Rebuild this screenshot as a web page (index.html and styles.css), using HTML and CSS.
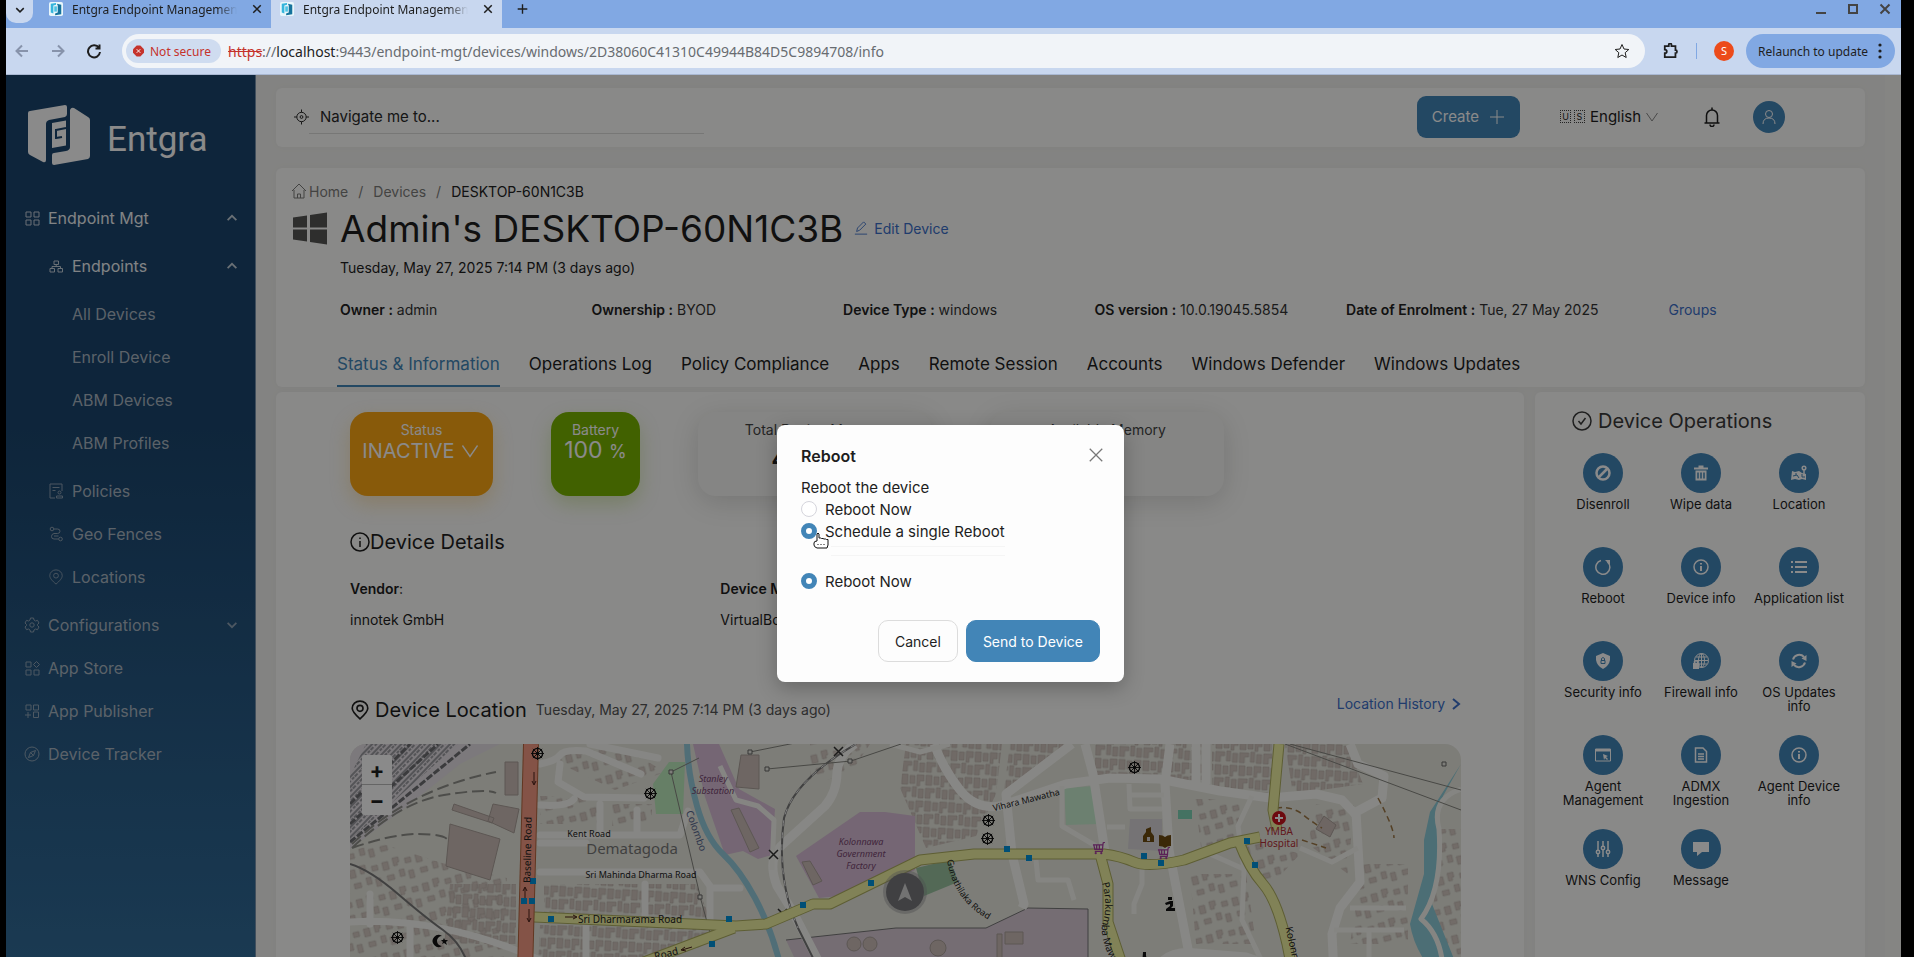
FILE: index.html
```html
<!DOCTYPE html>
<html lang="en">
<head>
  <meta charset="UTF-8">
  <title>Entgra Endpoint Management</title>
  <link rel="stylesheet" href="styles.css">
</head>
<body>
  <!-- Shared icons -->
  <svg class="defs" aria-hidden="true">
    <symbol id="i-down" viewBox="0 0 16 16"><path d="M3 5.500l5 5 5-5"/></symbol>
    <symbol id="i-chevron" viewBox="0 0 16 16"><path d="M2.500 4l5.500 8 5.500-8"/></symbol>
    <symbol id="i-up" viewBox="0 0 16 16"><path d="M3 10.500l5-5 5 5"/></symbol>
    <symbol id="i-close" viewBox="0 0 16 16"><path d="M3 3l10 10M13 3L3 13"/></symbol>
    <symbol id="i-plus" viewBox="0 0 16 16"><path d="M8 1v14M1 8h14"/></symbol>
    <symbol id="i-pin" viewBox="0 0 16 18"><path d="M8 17C4 13.500 1 10.500 1 7.500a7 6.500 0 0 1 14 0C15 10.500 12 13.500 8 17z"/><circle cx="8" cy="7.500" r="2.700"/></symbol>
    <symbol id="i-info" viewBox="0 0 20 20"><circle cx="10" cy="10" r="9"/><path d="M10 9v6M10 5.500v1.500"/></symbol>
    <symbol id="i-favicon" viewBox="0 0 16 16"><rect width="16" height="16" rx="2" fill="#e8f6fb" stroke="none"/><path d="M2 2l6-1v2L5 4v9l-3-1z" fill="#35b5dc" stroke="none"/><path d="M9 2l5 1v11l-7 1v-2l3-1V4z" fill="#15739c" stroke="none"/><path d="M6 5h3v6H6z" fill="#4cc3e3" stroke="none"/></symbol>
  </svg>

  <!-- Browser window -->
  <div class="tab-strip">
    <button class="tab-search" aria-label="Search tabs"><svg><use href="#i-down"/></svg></button>
    <div class="browser-tab">
      <svg class="favicon"><use href="#i-favicon"/></svg>
      <span class="tab-title">Entgra Endpoint Management</span>
      <button aria-label="Close tab"><svg><use href="#i-close"/></svg></button>
    </div>
    <div class="browser-tab current">
      <svg class="favicon"><use href="#i-favicon"/></svg>
      <span class="tab-title">Entgra Endpoint Management</span>
      <button aria-label="Close tab"><svg><use href="#i-close"/></svg></button>
    </div>
    <button class="new-tab" aria-label="New tab"><svg><use href="#i-plus"/></svg></button>
    <div class="window-buttons">
      <button aria-label="Minimize"><svg viewBox="0 0 12 12"><path d="M1 10h10"/></svg></button>
      <button aria-label="Maximize"><svg viewBox="0 0 12 12"><path d="M2 2h8v8H2z"/></svg></button>
      <button aria-label="Close"><svg viewBox="0 0 12 12"><path d="M1.500 1.500l9 9M10.500 1.500l-9 9"/></svg></button>
    </div>
  </div>
  <div class="toolbar">
    <button class="nav off" aria-label="Back"><svg viewBox="0 0 16 16"><path d="M14 8H3M8 2.500L2.500 8 8 13.500"/></svg></button>
    <button class="nav off" aria-label="Forward"><svg viewBox="0 0 16 16"><path d="M2 8h11M8 2.500L13.500 8 8 13.500"/></svg></button>
    <button class="nav" aria-label="Reload"><svg viewBox="0 0 16 16"><path d="M13 5A6 6 0 1 0 14 9M13.500 1.500v4h-4"/></svg></button>
    <div class="omnibox">
      <span class="not-secure"><svg viewBox="0 0 12 12"><path d="M4 0h4l4 4v4l-4 4H4L0 8V4z" fill="#c5322b"/><path d="M4 4l4 4M8 4l-4 4" stroke="#fff"/></svg>Not secure</span>
      <span class="url"><s>https</s>://<b>localhost</b>:9443/endpoint-mgt/devices/windows/2D38060C41310C49944B84D5C9894708/info</span>
      <button class="star" aria-label="Bookmark"><svg viewBox="0 0 16 16"><path d="M8 1.500l2 4.500 4.800.5-3.600 3.200 1 4.800L8 12l-4.200 2.500 1-4.800L1.200 6.500 6 6z"/></svg></button>
    </div>
    <button class="extensions" aria-label="Extensions"><svg viewBox="0 0 18 18"><path d="M2 3.500h4.500V2a1.500 1.500 0 0 1 3 0v1.500H14V8a1.500 1.500 0 0 1 0 3.500V16H2v-4.500c3 0 3-4 0-4z"/></svg></button>
    <span class="divider"></span>
    <span class="profile">S</span>
    <button class="relaunch">Relaunch to update <svg viewBox="0 0 4 16"><circle cx="2" cy="2" r="1.600"/><circle cx="2" cy="8" r="1.600"/><circle cx="2" cy="14" r="1.600"/></svg></button>
  </div>

  <div class="app">
    <nav class="sidebar">
      <a href="#" class="logo">
        <svg viewBox="0 0 62 60">
          <path d="M0 8q0-2 2-2L37 0q2 0 2 2v7q0 2-2 3L21 15q-3 1-3 4v36q0 3-3 2L2 50q-2-1-2-3z"/>
          <path d="M42 5q1-3 4-2l14 9q2 1 2 3v36q0 2-2 3l-34 6q-2 0-2-2v-8q0-2 2-2l12-2q4-1 4-4z"/>
          <path d="M24 18l14-2.500v25L24 43z"/>
          <path class="notch" d="M28 25l10-2M28 33l6-1M28 24v10"/>
        </svg>
        <span>Entgra</span>
      </a>
      <a href="#" class="item bright"><svg viewBox="0 0 16 16"><path d="M2 2h5v5H2zM10 2h5v5h-5zM2 10h5v5H2zM10 10h5v5h-5z"/></svg>Endpoint Mgt<svg class="arrow"><use href="#i-up"/></svg></a>
      <div class="submenu">
        <a href="#" class="item bright"><svg viewBox="0 0 16 16"><path d="M6 3h4.500v3.500H6zM2 10.500h4.500V14H2zM10 10.500h4.500V14H10zM8.200 6.500v2M4 10.500v-2h8.500v2"/></svg>Endpoints<svg class="arrow"><use href="#i-up"/></svg></a>
        <div class="submenu leaf">
          <a href="#" class="item">All Devices</a>
          <a href="#" class="item">Enroll Device</a>
          <a href="#" class="item">ABM Devices</a>
          <a href="#" class="item">ABM Profiles</a>
        </div>
        <a href="#" class="item"><svg viewBox="0 0 16 16"><path d="M7 15H2V1h12v7M4.500 4.500h7M4.500 7.500h3"/><circle cx="11.500" cy="9.500" r="1.500"/><path d="M8.500 15v-2h6v2z"/></svg>Policies</a>
        <a href="#" class="item"><svg viewBox="0 0 16 16"><circle cx="4" cy="3" r="1.800"/><circle cx="12.500" cy="13" r="1.800"/><path d="M6 3h3.500q2.500 0 2.500 2.200T9.500 7.500H6Q3.500 8 3.500 10.500T6 13h4.500M6 10h4.500"/></svg>Geo Fences</a>
        <a href="#" class="item"><svg><use href="#i-pin"/></svg>Locations</a>
      </div>
      <a href="#" class="item"><svg viewBox="0 0 16 16"><path d="M6.500 1h3l.5 2 1.500 1 2-.7 1.500 2.700L13.500 7.500v1L15 10l-1.500 2.700-2-.7-1.500 1-.5 2h-3L6 13l-1.500-1-2 .7L1 10l1.500-1.500v-1L1 6l1.500-2.700 2 .7L6 3z"/><circle cx="8" cy="8" r="2.200"/></svg>Configurations<svg class="arrow"><use href="#i-down"/></svg></a>
      <a href="#" class="item"><svg viewBox="0 0 16 16"><path d="M2 2h5v5H2zM12.500 1.500l3 3-3 3-3-3zM2 10h5v5H2zM10 10h5v5h-5z"/></svg>App Store</a>
      <a href="#" class="item"><svg viewBox="0 0 16 16"><path d="M2 2h5v5H2zM9.500 2h5v5h-5zM9.500 9h5v5.500h-5zM1 12h6M4 9v6"/></svg>App Publisher</a>
      <a href="#" class="item"><svg viewBox="0 0 16 16"><circle cx="8" cy="8" r="7"/><path d="M11.500 4.500L9.500 9.500l-5 2 2-5zM6.500 6.500l3 3"/></svg>Device Tracker</a>
    </nav>

    <main class="main">
      <header class="card topbar">
        <label class="search">
          <svg viewBox="0 0 16 16"><circle cx="8" cy="8" r="5"/><circle cx="8" cy="8" r="1.500"/><path d="M8 0v3M8 13v3M0 8h3M13 8h3"/></svg>
          <input type="text" placeholder="Navigate me to..." aria-label="Navigate me to">
        </label>
        <button class="create">Create <svg><use href="#i-plus"/></svg></button>
        <label class="language"><span class="flag">U</span><span class="flag">S</span>
          <select aria-label="Language"><option>English</option></select>
          <svg><use href="#i-chevron"/></svg>
        </label>
        <button class="bell" aria-label="Notifications"><svg viewBox="0 0 16 20"><path d="M8 .5V3M2.500 16V8.500a5.500 5.500 0 0 1 11 0V16M.5 16h15M6 17.500a2 2 0 0 0 4 0"/></svg></button>
        <button class="avatar" aria-label="Account"><svg viewBox="0 0 16 16"><circle cx="8" cy="5" r="3.500"/><path d="M2 15q0-6 6-6t6 6"/></svg></button>
      </header>

      <section class="card device">
        <div class="breadcrumb">
          <a href="#"><svg viewBox="0 0 16 16"><path d="M1 8l7-7 7 7M3 7v8h10V7M6.500 15v-4h3v4"/></svg>Home</a><i>/</i><a href="#">Devices</a><i>/</i><span>DESKTOP-60N1C3B</span>
        </div>
        <div class="title-row">
          <svg class="windows" viewBox="0 0 34 32"><path d="M0 5l14-2v12H0zM17 2.500L34 0v15H17zM0 17h14v12L0 27zM17 17h17v15l-17-2.500z"/></svg>
          <h1>Admin's DESKTOP-60N1C3B</h1>
          <a href="#"><svg viewBox="0 0 16 16"><path d="M1 15h14M3 12l1-4 7-7 2.500 2.500-7 7z"/></svg>Edit Device</a>
        </div>
        <p class="enrolled">Tuesday, May 27, 2025 7:14 PM (3 days ago)</p>
        <div class="facts">
          <span><b>Owner :</b> admin</span>
          <span><b>Ownership :</b> BYOD</span>
          <span><b>Device Type :</b> windows</span>
          <span><b>OS version :</b> 10.0.19045.5854</span>
          <span><b>Date of Enrolment :</b> Tue, 27 May 2025</span>
          <a href="#">Groups</a>
        </div>
        <nav class="tabs">
          <a href="#" class="active">Status &amp; Information</a>
          <a href="#">Operations Log</a>
          <a href="#">Policy Compliance</a>
          <a href="#">Apps</a>
          <a href="#">Remote Session</a>
          <a href="#">Accounts</a>
          <a href="#">Windows Defender</a>
          <a href="#">Windows Updates</a>
        </nav>
      </section>

      <div class="columns">
        <section class="card info">
          <div class="stats">
            <div class="stat inactive">Status<button>INACTIVE <svg><use href="#i-chevron"/></svg></button></div>
            <div class="stat battery">Battery<strong>100 <small>%</small></strong></div>
            <div class="stat">Total Device Memory<b>4.00 GB</b></div>
            <div class="stat">Available Memory<b>1.8</b></div>
          </div>
          <h2><svg><use href="#i-info"/></svg>Device Details</h2>
          <dl class="details">
            <div><dt>Vendor<span>:</span></dt><dd>innotek GmbH</dd></div>
            <div><dt>Device Model<span>:</span></dt><dd>VirtualBox</dd></div>
            <div></div>
          </dl>
          <div class="location-head">
            <h2><svg><use href="#i-pin"/></svg>Device Location</h2>
            <span>Tuesday, May 27, 2025 7:14 PM (3 days ago)</span>
            <a href="#">Location History <svg viewBox="0 0 10 16"><path d="M2 3l6 5-6 5"/></svg></a>
          </div>
          <div class="map">
            <svg class="map-tiles" viewBox="0 0 1111 230" preserveAspectRatio="xMidYMin slice">
              <defs>
                <pattern id="houses" width="34" height="30" patternUnits="userSpaceOnUse" patternTransform="rotate(-14)">
                  <path d="M2 3h6v8H2zM13 1h6v5h-2v3h-4zM25 4h6v5h-6zM4 17h7v5H4zM17 14h5v7h-5zM26 17h5v8h-5z" fill="#d3c8c1" stroke="#b9afa8" stroke-width=".6"/>
                </pattern>
                <pattern id="blocks" width="24" height="26" patternUnits="userSpaceOnUse" patternTransform="rotate(3)">
                  <path d="M1 1h6v10H1zM9 2h5v8H9zM16 1h7v6h-4v5h-3zM1 14h9v4H6v6H1zM12 13h4v10h-4zM18 15h5v9h-5z" fill="#d0c4bd" stroke="#b5aba4" stroke-width=".6"/>
                </pattern>
                <pattern id="rails" width="10" height="7" patternUnits="userSpaceOnUse" patternTransform="rotate(-46)">
                  <path d="M0 2h10M0 5h4M6 5h3" stroke="#84858a" stroke-width="1.500"/>
                </pattern>
                <symbol id="m-wheel" viewBox="0 0 14 14"><circle cx="7" cy="7" r="5.500" fill="none" stroke="#111" stroke-width="1.500"/><circle cx="7" cy="7" r="2" fill="#111"/><path d="M7 0v14M0 7h14M2 2l10 10M12 2L2 12" stroke="#111"/></symbol>
                <symbol id="m-cart" viewBox="0 0 14 14"><path d="M14 0l-2 1-1 9H3M1 3h11M2 3l1 5h9M5 3v5M8 3v5" fill="none" stroke="#a63da0" stroke-width="1.300"/><circle cx="4" cy="12" r="1.200" fill="#a63da0"/><circle cx="10" cy="12" r="1.200" fill="#a63da0"/></symbol>
                <path id="gunathilaka" d="M597 116q6 40 42 60"/>
                <path id="parakumba" d="M752 139q6 20 1 38t12 46"/>
              </defs>
              <rect width="1111" height="230" fill="#e7e7de"/>

              <!-- Railway yard -->
              <path d="M0 0h150L110 20 60 60 0 105z" fill="#e5e0e5"/>
              <path d="M16 0h92L0 96V32z" fill="url(#rails)"/>
              <path d="M0 98L120 0M0 80L88 0M0 60L60 0" stroke="#6d6e72" stroke-width="3" stroke-dasharray="7 2" fill="none"/>
              <path d="M2 100Q60 45 146 28M2 104Q50 58 94 51t52-2M2 104q40-14 66-14t30 6" stroke="#8f8f8a" stroke-width="2" stroke-dasharray="12 5" fill="none"/>

              <!-- Residential blocks -->
              <path d="M0 107l30-8 62 20 65 15-3 79H0z" fill="url(#houses)"/>
              <path d="M100 140h66v60H94zM194 140h152l14 34-166-6zM190 181l180 2-20 20-80 20H188z" fill="url(#blocks)"/>
              <path d="M205 10l70-6 40 24-50 18-50-24zM190 52h60v28h-60zM262 60h40v22h-40z" fill="url(#houses)"/>
              <path d="M556 0h96l-6 50-20 42-50 12-26-60zM660 0h62l-68 46zM745 0h112v36h-112zM862 0h60v50l-60-8zM935 0h62l16 40-70 10z" fill="url(#blocks)"/>
              <path d="M845 55h46l-4 40-36 8zM890 90l60 20-20 22-20 10zM840 130h56l10 70h-60zM966 60h38l-6 70-40-30zM1012 120h46v80h-58zM1084 85h27v128h-27z" fill="url(#houses)"/>
              <path d="M460 0h60l-20 30-40 10z" fill="url(#houses)"/>

              <!-- Land use -->
              <path d="M335 18h-16l-16 22 3 30h27z" fill="#bdeabd"/>
              <path d="M343 0h26l20 45 36 20-3 46-14 4-15-8-18 4-20-58z" fill="#d8bdd6"/>
              <path d="M446 112l64-44h25l30 4v54l-56 24-40 4z" fill="#d8bdd6"/>
              <path d="M436 196l110-12h90l42-20 60 1v65H452z" fill="#d8c9d5"/>
              <path d="M436 196l110-12h90l42-20 60 1v65" fill="none" stroke="#777"/>
              <path d="M714 44l30-2 5 38-33 1z" fill="#c8ecd0"/>
              <path d="M566 124l34-8 8 22-34 14z" fill="#99c3a0"/>
              <path d="M828 66h14v9h-14z" fill="#7fd3b5"/>
              <path d="M780 75h32v32l-34-2z" fill="#d8d5d9"/>

              <!-- Large buildings -->
              <g fill="#cbbdb7" stroke="#aba09a">
                <path d="M100 80l50 15-10 41-44-14zM143 60l26 5-5 24-26-12zM155 18h13v33h-13zM104 60l40 14-2 5-40-13z"/>
                <path d="M391 11h18v34l-23-2zM381 66l8-2 20 40-9 4zM452 118l8-1 12 20-9 4zM655 188h18v12h-18zM647 190h5v40h-5zM974 72l12 9-6 12-14-8z"/>
                <circle cx="588" cy="204" r="8"/><circle cx="504" cy="200" r="7"/><circle cx="520" cy="200" r="7"/>
              </g>

              <!-- Water -->
              <path d="M337 0q1 30 10 62t26 48 32 44 24 62" fill="none" stroke="#94cbdc" stroke-width="6"/>
              <path d="M1111 20l-18 32-7 24 4 30-8 54 28 70h-26q-20-25-24-50l14-50v-34l6-28 31-48z" fill="#8ccbd8"/>

              <!-- Minor roads -->
              <g fill="none" stroke="#f8f8f4" stroke-width="7" stroke-linejoin="round" stroke-linecap="round">
                <path d="M190 91h140l8-24M190 99h46M190 128h160l10 14v40M360 144h30"/>
                <path d="M190 20q16-3 20-9t26-4l55 23M210 20l-2 18 26 15 60 1M240 0l68 14M190 61q28 2 34-6M250 60v30M287 66v22M236 180v34M295 140v40"/>
                <path d="M0 178q90-6 190 38M20 150v30M60 182v30"/>
              </g>
              <g fill="none" stroke="#fafaf6" stroke-width="9" stroke-linejoin="round">
                <path d="M505 0q-16 10-18 28 0 20-12 34l-44 40q-14 14-4 40l16 26 32 62"/>
                <path d="M584 0q10 26 26 46t40 16l66-22 44-6 50 1 60 12 50 7 46-4 26 6 15 16M735 0l8 30 12 78M722 0l-66 50 6 60 12 50-2 4"/>
                <path d="M820 0l-5 40 4 66 20 104M846 0v40M856 0v40M1000 0l8 20 26 12-2 22-26 14 4 70-20 26-8 26 2 40"/>
                <path d="M806 226q10-20 40-17l50 4 46 16"/>
              </g>
              <g fill="none" stroke="#f6f6f1" stroke-width="5" stroke-linejoin="round">
                <path d="M779 40l1 25h32M780 51h34M712 42v40l34 20M757 83h18M902 52l-14 30 6 44-2 50 24 50M950 104l32 14 26-14M984 186h70M1000 164h56M1019 186v40M686 116l2 20h30l6 20M792 116v24l-8 20v10M860 110l36 16M1111 45q-30 10-22 40 4 60-18 90 20 16 22 50"/>
                <path d="M370 22l16 34 22 6 16 14-2 50M540 0l30 8 30-8"/>
              </g>

              <!-- Railway and power lines -->
              <path d="M0 120q20 6 48 30t45 36 24 32M506 0q-62 36-72 74-8 60 14 110l20 40" fill="none" stroke="#777" stroke-width="2"/>
              <path d="M506 0q-62 36-72 74-8 60 14 110" fill="none" stroke="#eee" stroke-dasharray="6 6"/>
              <path d="M349 14l-28 14 30 128 12 44M400 8l50-10M417 25l84-8 50-17M935 0l176 66M940 0l171 46" fill="none" stroke="#85857f"/>
              <path d="M926 64q16-2 26 6t20 14M1028 54q16 30 16 40M952 96l24 8" fill="none" stroke="#9c7745" stroke-width="1.500" stroke-dasharray="6 4"/>
              <path d="M319 26h4v4h-4zM398 6h4v4h-4zM415 23h4v4h-4zM498 15h4v4h-4zM348 151h4v4h-4zM1092 18h4v4h-4z" fill="#e8e8e0" stroke="#666"/>
              <path d="M484 3l9 9m0-9l-9 9M419 106l9 9m0-9l-9 9M428 165l9 9m0-9l-9 9" stroke="#333" stroke-width="1.500"/>

              <!-- Main roads -->
              <g fill="none" stroke-linejoin="round">
                <path d="M184 173l202 9 30-2 47-20h17l90-44 54-6h130q16 2 30 8t50-2l46-17 30-6M750 110l8 30v38l20 60M929 0l-6 66 4 20M889 98q10 26 24 42t24 60l8 40M384 184l-90 34-50 18" stroke="#adae60" stroke-width="11"/>
                <path d="M184 173l202 9 30-2 47-20h17l90-44 54-6h130q16 2 30 8t50-2l46-17 30-6M750 110l8 30v38l20 60M929 0l-6 66 4 20M889 98q10 26 24 42t24 60l8 40M384 184l-90 34-50 18" stroke="#eff0a2" stroke-width="9"/>
                <path d="M181 0l-6 230" stroke="#b4653d" stroke-width="16"/>
                <path d="M181 0l-6 230" stroke="#f49a84" stroke-width="14"/>
                <path d="M184 28v12m-2-3l2 4 2-4M175 156v-12m-2 3l2-4 2 4M179 165v12m-2-3l2 4 2-4M215 173h11m-3-2l4 2-4 2M342 203l-10 3m3-3l-4 3 5 1" stroke="#4a2018"/>
              </g>
              <path d="M180 134h6v6h-6zM171 154h6v6h-6zM179 154h6v6h-6zM198 172h6v6h-6zM376 172h6v6h-6zM359 197h6v6h-6zM450 158h6v6h-6zM518 136h6v6h-6zM654 102h6v6h-6zM676 111h6v6h-6zM791 109h6v6h-6zM808 116h6v6h-6zM894 94h6v6h-6zM902 118h6v6h-6z" fill="#0092da"/>

              <!-- Points of interest -->
              <use href="#m-wheel" x="181" y="3" width="13" height="13"/>
              <use href="#m-wheel" x="294" y="43" width="13" height="13"/>
              <use href="#m-wheel" x="41" y="187" width="13" height="13"/>
              <use href="#m-wheel" x="778" y="17" width="13" height="13"/>
              <use href="#m-wheel" x="632" y="70" width="13" height="13"/>
              <use href="#m-wheel" x="631" y="88" width="13" height="13"/>
              <use href="#m-cart" x="742" y="98" width="13" height="13"/>
              <use href="#m-cart" x="807" y="103" width="13" height="13"/>
              <path d="M92 192a6 6 0 1 0 0 10 5 5 0 1 1 0-10zM94 194l1 2h3l-2 2 1 3-3-2-2 1 1-2-2-2h2z" fill="#111"/>
              <path d="M793 92l3-4v-3l5-2v5l3 4v6h-11zM797 93v4h3v-4z" fill="#6e4a10" fill-rule="evenodd"/>
              <path d="M809 91q4 0 6 2 2-2 6-2v11q-4 0-6 2-2-2-6-2z" fill="#6e4a10"/>
              <path d="M818 153h4v3h-4zM815 159l5-2h3v5l-2 2h4v3h-9v-2l4-3v-2l-4 1zM793 208h3v4l4 10h-8z" fill="#111"/>
              <circle cx="929" cy="74" r="7" fill="#c9141c"/>
              <path d="M929 70v8M925 74h8" stroke="#fff" stroke-width="2"/>
              <circle cx="555" cy="148" r="22" fill="#8e8e92" opacity=".4"/>
              <circle cx="555" cy="148" r="19" fill="#77777b"/>
              <path d="M555 139l7 18-7-4-7 4z" fill="#d2d2d2"/>

              <g class="map-text">
                <text transform="translate(181 106) rotate(-89)" class="road big">Baseline Road</text>
                <text x="239" y="93" class="road">Kent Road</text>
                <text x="282" y="110" class="district">Dematagoda</text>
                <text x="291" y="134" class="road">Sri Mahinda Dharma Road</text>
                <text x="280" y="179" class="road big">Sri Dharmarama Road</text>
                <text transform="translate(343 88) rotate(70)" class="water">Colombo</text>
                <text x="363" y="38" class="works">Stanley</text><text x="363" y="50" class="works">Substation</text>
                <text x="511" y="101" class="works">Kolonnawa</text><text x="511" y="113" class="works">Government</text><text x="511" y="125" class="works">Factory</text>
                <text transform="translate(677 59) rotate(-14)" class="road">Vihara Mawatha</text>
                <text class="road curve"><textPath href="#gunathilaka">Gunathilaka Road</textPath></text>
                <text class="road big curve"><textPath href="#parakumba">Parakumba Mawatha</textPath></text>
                <text transform="translate(941 209) rotate(78)" class="road big">Kolonnawa</text>
                <text transform="translate(317 213) rotate(-14)" class="road big">Road</text>
                <text x="929" y="91" class="hospital">YMBA</text><text x="929" y="103" class="hospital">Hospital</text>
              </g>
            </svg>
            <div class="zoom"><button aria-label="Zoom in">+</button><button aria-label="Zoom out">−</button></div>
          </div>
        </section>

        <aside class="card operations">
          <h2><svg viewBox="0 0 20 20"><circle cx="10" cy="10" r="9"/><path d="M6.500 10l2.500 3 4.500-6"/></svg>Device Operations</h2>
          <div class="ops">
            <button><i><svg viewBox="0 0 16 16"><circle cx="8" cy="8" r="6.500" stroke-width="2.500"/><path d="M12 4l-8 8" stroke-width="2.500"/></svg></i>Disenroll</button>
            <button><i><svg viewBox="0 0 16 16"><path d="M1 3.500h14M5.500 1.500h5" stroke-width="2"/><path d="M2.500 5.500h11V15.500h-11z" class="solid"/><path d="M5 7.500v6M8 7.500v6M11 7.500v6" class="cut"/></svg></i>Wipe data</button>
            <button><i><svg viewBox="0 0 16 16"><path d="M1 6l3 1 4-1 3 2 4 1v6l-4-1-3 1-4-1-4 1z" class="solid"/><circle cx="13" cy="3" r="1.800"/><path d="M13 5v4"/><path d="M2 11l4-1 2 3M5 8v2M11 9v3h3" class="cut thin"/></svg></i>Location</button>
            <button><i><svg viewBox="0 0 16 16"><path d="M6 1.500A7 7 0 1 0 12.500 3"/><path d="M10 1h5v5z" class="solid"/></svg></i>Reboot</button>
            <button><i><svg viewBox="0 0 16 16"><circle cx="8" cy="8" r="7"/><path d="M8 7v5M8 4v1.500" stroke-width="2"/></svg></i>Device info</button>
            <button><i><svg viewBox="0 0 16 16"><path d="M0 3h2M4 3h12M0 8h2M4 8h12M0 13h2M4 13h12" stroke-width="2"/></svg></i>Application list</button>
            <button><i><svg viewBox="0 0 16 16"><path d="M8 0l7 3v4Q14 13 8 16 2 13 1 7V3z" class="solid"/><path d="M6 7.500h4v3H6zM6.500 7V5.500q1.500-2 3 0V7" class="cut thin"/></svg></i>Security info</button>
            <button><i><svg viewBox="0 0 16 16"><g class="thin"><circle cx="8.500" cy="7.500" r="7"/><ellipse cx="8.500" cy="7.500" rx="3" ry="7"/><path d="M2 7.500h13M8.500 1v13M3 4h11M3 11h11"/></g><path d="M0 10h6v6H0z" class="solid"/><path d="M1.500 10V8.500q1.500-1.500 3 0V10"/></svg></i>Firewall info</button>
            <button><i><svg viewBox="0 0 16 16"><path d="M2 6.500A6.500 6.500 0 0 1 13 4M14 9.500A6.500 6.500 0 0 1 3 12" stroke-width="2"/><path d="M15.500 2v6l-5-2.500zM.5 14V8l5 2.500z" class="solid"/></svg></i>OS Updates info</button>
            <button><i><svg viewBox="0 0 16 16"><path d="M.5 2h15v12H.5z" class="thin"/><path d="M0 2h16v2.500H0zM8 7l5 2-2 1 2 2-1 1-2-2-1 2z" class="solid"/></svg></i>Agent Management</button>
            <button><i><svg viewBox="0 0 16 16"><path d="M2.500 1H10l3.500 3.500V15h-11zM5 7h6M5 9.500h6M5 12h6"/></svg></i>ADMX Ingestion</button>
            <button><i><svg viewBox="0 0 16 16"><circle cx="8" cy="8" r="7"/><path d="M8 7v5M8 4v1.500" stroke-width="2"/></svg></i>Agent Device info</button>
            <button><i><svg viewBox="0 0 16 16"><path d="M3 0v9M3 13v3M8 0v5M8 9v7M13 0v9M13 13v3"/><circle cx="3" cy="11" r="1.700"/><circle cx="8" cy="7" r="1.700"/><circle cx="13" cy="11" r="1.700"/></svg></i>WNS Config</button>
            <button><i><svg viewBox="0 0 16 16"><path d="M0 1h16v10H9l-5 4v-4H0z" class="solid"/></svg></i>Message</button>
          </div>
        </aside>
      </div>
    </main>

    <!-- Reboot dialog -->
    <div class="mask">
      <form class="modal" role="dialog" aria-labelledby="modal-title">
        <div class="modal-head">
          <h3 id="modal-title">Reboot</h3>
          <button type="button" class="close" aria-label="Close"><svg><use href="#i-close"/></svg></button>
        </div>
        <p>Reboot the device</p>
        <label><input type="radio" name="mode" value="now">Reboot Now</label>
        <label class="pointed"><input type="radio" name="mode" value="single" checked>Schedule a single Reboot
          <svg class="cursor" viewBox="0 0 16 17"><path d="M4 9V2q1-2 2 0v4h1.500l1 .5h1.500l1 .5h1.500l1 .5H15V13l-1 3H4q-3-1-3-3v-2q0-2 3-2z"/><path d="M5 12v1M8 12v1M11 12v1"/></svg>
        </label>
        <div class="schedule-slot"></div>
        <label><input type="radio" name="when" value="now" checked>Reboot Now</label>
        <div class="modal-foot">
          <button type="button" class="cancel">Cancel</button>
          <button type="submit" class="send">Send to Device</button>
        </div>
      </form>
    </div>
  </div>
</body>
</html>
```
FILE: styles.css
```css
* {
  box-sizing: border-box;
}
body {
  display: flex;
  flex-direction: column;
  height: 100vh;
  margin: 0;
  padding: 0 13px 0 6px;
  overflow: hidden;
  background: #000;
  color: #1e1e1e;
  font-family: Inter, "Open Sans", sans-serif;
  font-size: 15px;
}
button {
  padding: 0;
  border: none;
  background: none;
  color: inherit;
  font: inherit;
  cursor: pointer;
}
a {
  color: inherit;
  text-decoration: none;
}
svg {
  display: block;
  flex: none;
  width: 16px;
  height: 16px;
  fill: none;
  stroke: currentColor;
}
h1, h2, h3, p, dl, dd {
  margin: 0;
  font-weight: 400;
}
.defs {
  position: absolute;
  width: 0;
  height: 0;
}

/* Browser window */
.tab-strip, .toolbar {
  display: flex;
  flex: none;
  align-items: center;
  font-family: "Noto Sans", sans-serif;
  font-size: 12px;
}
.tab-strip {
  height: 28px;
  background: #81a8e3;
}
.tab-search {
  display: flex;
  align-items: center;
  justify-content: center;
  align-self: flex-start;
  width: 27px;
  height: 23px;
  padding-bottom: 4px;
  border-radius: 0 0 10px 10px;
  background: #c8d7ef;
}
.tab-search svg {
  width: 12px;
  stroke-width: 2;
}
.browser-tab {
  display: flex;
  align-items: center;
  width: 231px;
  height: 28px;
  padding: 0 8px 10px 9px;
}
.tab-search + .browser-tab {
  margin-left: 7px;
}
.browser-tab.current {
  background: #c8d7ef;
}
.favicon {
  width: 14px;
  margin-right: 9px;
}
.tab-title {
  width: 165px;
  overflow: hidden;
  white-space: nowrap;
  -webkit-mask-image: linear-gradient(90deg, #000 88%, transparent);
  mask-image: linear-gradient(90deg, #000 88%, transparent);
}
.browser-tab button {
  margin-left: auto;
}
.browser-tab button svg {
  width: 12px;
  stroke-width: 2;
}
.new-tab {
  padding: 0 0 10px 15px;
}
.new-tab svg {
  width: 11px;
  stroke-width: 2;
}
.window-buttons {
  display: flex;
  gap: 20px;
  margin-left: auto;
  padding: 0 10px 10px 0;
  color: #444;
}
.window-buttons svg {
  width: 12px;
  stroke-width: 2;
}
.toolbar {
  height: 47px;
  padding: 0 6px 0 8px;
  border-bottom: 1px solid #a9b8d2;
  background: #c8d7ef;
}
.nav {
  margin-right: 20px;
}
.nav.off {
  color: #8793ab;
}
.nav svg {
  stroke-width: 2;
}
.omnibox {
  display: flex;
  flex: 1;
  align-items: center;
  height: 34px;
  padding: 0 15px 0 4px;
  border-radius: 17px;
  background: #f1f4f8;
}
.not-secure {
  display: flex;
  align-items: center;
  gap: 6px;
  height: 24px;
  margin-right: 7px;
  padding: 0 10px 0 7px;
  border-radius: 12px;
  background: #cfdcf0;
  color: #c5322b;
}
.not-secure svg {
  width: 11px;
  stroke: none;
}
.url {
  color: #686c71;
  font-size: 14px;
}
.url s {
  color: #c5322b;
}
.url b {
  color: #222;
  font-weight: 400;
}
.star {
  margin-left: auto;
}
.extensions {
  margin: 0 17px 0 18px;
}
.extensions svg {
  stroke-width: 2;
}
.divider {
  width: 1px;
  height: 16px;
  background: #81a8e3;
}
.profile {
  width: 20px;
  height: 20px;
  margin: 0 12px 0 17px;
  border-radius: 50%;
  background: #ec4b1b;
  color: #fff;
  font-size: 11px;
  line-height: 20px;
  text-align: center;
}
.relaunch {
  display: flex;
  align-items: center;
  gap: 10px;
  height: 34px;
  padding: 0 13px 0 12px;
  border-radius: 17px;
  background: #81a8e3;
}
.relaunch svg {
  width: 4px;
  fill: currentColor;
  stroke: none;
}

/* Application shell */
.app {
  position: relative;
  display: flex;
  flex: 1;
  min-height: 0;
  overflow: hidden;
}
.sidebar {
  flex: none;
  width: 250px;
  padding: 30px 16px 0 18px;
  border-right: 1px solid #7893ac;
  background: linear-gradient(#1b456d 40%, #316b98);
  color: #a9b6c2;
  font-size: 16px;
}
.logo {
  display: flex;
  align-items: center;
  gap: 17px;
  height: 60px;
  margin-bottom: 31px;
  padding-left: 4px;
  color: #fff;
  font-family: Roboto, sans-serif;
  font-size: 35px;
}
.logo svg {
  width: 62px;
  height: 60px;
  fill: #fff;
  stroke: none;
}
.logo .notch {
  fill: none;
  stroke: #1b456d;
  stroke-width: 2;
}
.logo span {
  padding-top: 8px;
}
.item {
  display: flex;
  align-items: center;
  gap: 8px;
  height: 43px;
}
.item.bright {
  color: #eef2f5;
}
.item svg {
  opacity: .8;
}
.item .arrow {
  width: 14px;
  margin-left: auto;
  stroke-width: 2;
}
.submenu {
  padding: 5px 0 5px 24px;
}
.main {
  flex: 1;
  min-width: 0;
  padding: 13px 20px 0;
  border-right: 16px solid #f5f5f2;
  background: #f3f3f0;
}
.card {
  border-radius: 6px;
  background: #fdfdfb;
  box-shadow: 0 0 8px rgba(0, 0, 0, .03);
}
.topbar {
  display: flex;
  align-items: center;
  height: 59px;
  margin-bottom: 21px;
  padding: 0 80px 2px 18px;
}
.search {
  display: flex;
  align-items: center;
  width: 410px;
}
.search svg {
  width: 15px;
}
.search input {
  flex: 1;
  height: 34px;
  padding: 0 11px;
  border: none;
  border-bottom: 1px solid #dcdcda;
  background: none;
  font: inherit;
}
.search input::placeholder {
  color: #2a2a2a;
}
.create {
  display: flex;
  align-items: center;
  gap: 10px;
  height: 42px;
  margin-left: auto;
  padding: 0 15px;
  border-radius: 9px;
  background: #4285b7;
  color: #fff;
}
.language {
  display: flex;
  align-items: center;
  margin: 0 44px 0 40px;
}
.flag {
  width: 11px;
  margin-right: 3px;
  border: 1px dotted #444;
  font-size: 9px;
  text-align: center;
}
.language select {
  appearance: none;
  width: 56px;
  padding: 0 0 0 2px;
  border: none;
  background: none;
  color: inherit;
  font: inherit;
}
.language svg {
  color: #888;
}
.bell {
  margin-right: 33px;
}
.bell svg {
  height: 20px;
  stroke-width: 1.5;
}
.avatar {
  display: flex;
  align-items: center;
  justify-content: center;
  width: 32px;
  height: 32px;
  border-radius: 50%;
  background: #4285b7;
  color: #fff;
}

/* Device header */
.device {
  height: 219px;
  margin-bottom: 5px;
  padding: 12px 15px 0;
}
.breadcrumb {
  display: flex;
  align-items: center;
  height: 22px;
  color: #7d7d7b;
  font-size: 14px;
}
.breadcrumb a {
  display: flex;
  align-items: center;
  gap: 2px;
}
.breadcrumb i {
  margin: 0 10px;
  font-style: normal;
}
.breadcrumb span {
  color: #222;
}
.title-row {
  display: flex;
  align-items: center;
  height: 52px;
}
.windows {
  width: 34px;
  height: 33px;
  margin: 0 13px 0 2px;
  fill: #555553;
  stroke: none;
}
h1 {
  font-size: 37px;
}
.title-row a {
  display: flex;
  gap: 6px;
  margin-left: 11px;
  color: #3b6fc9;
  font-size: 14px;
}
.title-row a svg {
  width: 14px;
}
.enrolled {
  height: 28px;
  padding-left: 49px;
  font-size: 14px;
  line-height: 28px;
}
.facts {
  display: grid;
  grid-template-columns: repeat(6, 1fr);
  margin-top: 18px;
  padding-left: 49px;
  color: #333;
  font-size: 14px;
  line-height: 20px;
}
.facts b {
  color: #222;
  font-weight: 600;
}
.facts span {
  white-space: nowrap;
}
.facts a {
  padding-left: 70px;
  color: #3b6fc9;
}
.tabs {
  display: flex;
  gap: 29px;
  margin-top: 22px;
  padding-left: 46px;
  font-size: 17px;
  line-height: 45px;
}
.tabs a {
  height: 45px;
}
.tabs .active {
  border-bottom: 2px solid #4285b7;
  color: #4285b7;
}

/* Status & information */
.columns {
  display: flex;
  align-items: stretch;
  gap: 11px;
}
.info {
  flex: 1;
  min-width: 0;
  padding: 20px 63px 0 74px;
}
.stats {
  display: flex;
  gap: 58px;
  height: 84px;
  margin-bottom: 34px;
}
.stat {
  display: flex;
  flex-direction: column;
  align-items: center;
  width: 234px;
  padding-top: 8px;
  border-radius: 18px;
  background: #f6f6f4;
  color: #444;
  font-size: 14px;
  line-height: 20px;
  box-shadow: 0 6px 28px rgba(0, 0, 0, .14);
}
.stat b {
  margin-top: 5px;
  color: #222;
  font-size: 22px;
  line-height: 28px;
}
.stat.inactive {
  width: 143px;
  background: #fba613;
  color: #fff;
  box-shadow: 0 8px 20px rgba(251, 166, 19, .25);
}
.stat.battery {
  width: 89px;
  background: #79b300;
  color: #fff;
  box-shadow: 0 8px 20px rgba(121, 179, 0, .25);
}
.stat button {
  display: flex;
  align-items: center;
  gap: 4px;
  font-size: 20px;
}
.stat button svg {
  width: 22px;
  height: 22px;
}
.stat strong {
  font-size: 23px;
  font-weight: 400;
}
.stat small {
  font-size: 18px;
}
h2 {
  display: flex;
  align-items: center;
  font-size: 20px;
  line-height: 24px;
}
h2 svg {
  width: 20px;
  height: 20px;
  stroke-width: 1.5;
}
.details {
  display: grid;
  grid-template-columns: repeat(3, 1fr);
  margin: 24px 0 64px;
  font-size: 14px;
  line-height: 22px;
}
dt {
  margin-bottom: 9px;
  font-weight: 600;
}
dt span {
  font-weight: 400;
}
.location-head {
  display: flex;
  align-items: center;
  gap: 9px;
  margin-bottom: 20px;
}
.location-head h2 svg {
  margin-right: 5px;
}
.location-head span {
  color: #555;
  font-size: 14px;
}
.location-head a {
  display: flex;
  align-items: center;
  gap: 6px;
  margin-left: auto;
  padding-bottom: 12px;
  color: #3b6fc9;
  font-size: 14px;
}
.location-head a svg {
  stroke-width: 2;
  width: 10px;
}
.map {
  position: relative;
  height: 230px;
  border-radius: 16px;
  overflow: hidden;
}
.map-tiles {
  width: 100%;
  height: 100%;
  stroke: none;
}
.map-text {
  font-family: "Noto Sans", sans-serif;
  text-anchor: middle;
}
.road {
  fill: #222;
  font-size: 9px;
}
.big {
  font-size: 10px;
}
.curve {
  text-anchor: start;
}
.district {
  fill: #777;
  font-size: 15px;
}
.water {
  fill: #55658c;
  font-size: 10px;
}
.works {
  fill: #77456f;
  font-size: 9px;
  font-style: italic;
}
.hospital {
  fill: #b52e36;
  font-size: 10px;
}
.zoom {
  position: absolute;
  top: 11px;
  left: 12px;
  width: 30px;
  border-radius: 2px;
  background: #fff;
}
.zoom button {
  display: block;
  width: 30px;
  height: 30px;
  font-size: 22px;
  font-weight: 700;
  line-height: 28px;
}
.zoom button:first-child {
  border-bottom: 1px solid #bbb;
}

/* Device operations */
.operations {
  flex: none;
  width: 330px;
  padding: 17px 17px 0 19px;
}
.operations h2 {
  gap: 6px;
  margin-bottom: 20px;
  padding-left: 18px;
  color: #3a3a3a;
}
.ops {
  display: grid;
  grid-template-columns: repeat(3, 1fr);
  grid-auto-rows: 94px;
}
.ops button {
  display: flex;
  flex-direction: column;
  align-items: center;
  padding: 0 3px;
  font-size: 13px;
  line-height: 14px;
}
.ops i {
  display: flex;
  align-items: center;
  justify-content: center;
  flex: none;
  width: 40px;
  height: 40px;
  margin-bottom: 4px;
  border-radius: 50%;
  background: #4285b7;
  color: #fff;
}
.ops svg {
  stroke-width: 1.5;
}
.ops .solid {
  fill: currentColor;
  stroke: none;
}
.ops .cut {
  stroke: #4285b7;
}
.ops .thin {
  stroke-width: 1;
}

/* Dialog */
.mask {
  position: absolute;
  inset: 0;
  display: flex;
  align-items: flex-start;
  justify-content: center;
  padding: 350px 6px 0 0;
  background: rgba(0, 0, 0, .46);
}
.modal {
  width: 347px;
  padding: 20px 18px 20px 24px;
  border-radius: 8px;
  background: #fdfdfd;
  box-shadow: 0 6px 20px rgba(0, 0, 0, .25);
}
.modal-head {
  display: flex;
  justify-content: space-between;
  height: 31px;
}
.modal h3 {
  font-size: 16px;
  font-weight: 600;
  line-height: 22px;
}
.close {
  width: 20px;
  height: 16px;
  color: #777;
}
.close svg {
  width: 20px;
  height: 20px;
}
.modal p, .modal label {
  display: flex;
  align-items: center;
  height: 22px;
  font-size: 15px;
}
.modal input {
  appearance: none;
  width: 16px;
  height: 16px;
  margin: 0 8px 0 0;
  border: 1px solid #d5d5dc;
  border-radius: 50%;
  background: #fff;
}
.modal input:checked {
  border: 5px solid #4285b7;
}
.pointed {
  position: relative;
}
.cursor {
  position: absolute;
  left: 12px;
  top: 12px;
  width: 16px;
  height: 17px;
  fill: #fff;
  stroke: #111;
}
.schedule-slot {
  width: 174px;
  height: 10px;
  margin: 4px 0 14px 30px;
  border: solid #f5f5f5;
  border-width: 1px 0;
}
.modal-foot {
  display: flex;
  justify-content: flex-end;
  gap: 8px;
  margin-top: 28px;
  padding-right: 6px;
  font-size: 14px;
}
.modal-foot button {
  height: 42px;
  padding: 0 16px;
  border: 1px solid #dcdcdc;
  border-radius: 10px;
}
.modal-foot .send {
  border-color: #4285b7;
  background: #4285b7;
  color: #fff;
}
```
